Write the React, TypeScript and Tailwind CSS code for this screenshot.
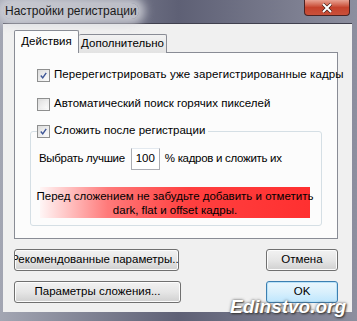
import React from "react";

function CheckBox({ checked }: { checked: boolean }) {
  return (
    <div className="shrink-0 w-[13px] h-[13px] border border-[#8e8f8f] bg-gradient-to-br from-[#dcdcdc] to-[#fbfbfb] p-[2px] flex items-center justify-center">
      <div className="w-full h-full bg-gradient-to-br from-[#e4e4e4] to-[#fafafa] flex items-center justify-center">
        {checked && (
          <svg width="9" height="9" viewBox="0 0 9 9">
            <path d="M1 4.5 L3.5 7.5 L8 1" fill="none" stroke="#3d5596" strokeWidth="1.8" />
          </svg>
        )}
      </div>
    </div>
  );
}

function Btn({ children, w, primary }: { children: React.ReactNode; w: string; primary?: boolean }) {
  return (
    <div
      className={`${w} h-[22px] rounded-[3px] border overflow-hidden flex items-center justify-center whitespace-nowrap ${
        primary
          ? "border-[#3c7fb1] bg-gradient-to-b from-[#eaf6fd] via-[#d9f0fc] to-[#bee6fd] shadow-[inset_0_0_0_1px_#b9e2f8]"
          : "border-[#707070] bg-gradient-to-b from-[#f2f2f2] via-[#e6e6e6] to-[#d0d0d0] shadow-[inset_0_0_0_1px_#fcfcfc]"
      }`}
    >
      {children}
    </div>
  );
}

export default function App() {
  return (
    <div
      className="relative w-[357px] h-[321px] overflow-hidden bg-gradient-to-r from-[#a3a6b3] via-[#5e6075] to-[#8d8f9f] text-[11.5px] text-black whitespace-nowrap"
      style={{ fontFamily: '"Liberation Sans", Arial, sans-serif' }}
    >
      {/* title bar */}
      <div className="h-[23px] flex items-start justify-between pl-[3px] pr-[7px]">
        <div className="mt-[3px] px-[2px] text-[12px] leading-[16px] text-[#1a1a1a] bg-[#d0d1d7]/80 rounded-[8px] shadow-[0_0_10px_6px_rgba(214,215,221,0.8)]">
          Настройки регистрации
        </div>
        <div className="ml-auto w-[46px] h-[16px] rounded-b-[4px] border border-t-0 border-[#4a2222] bg-gradient-to-b from-[#e8a293] via-[#c5422c] to-[#c9503a] flex items-center justify-center">
          <svg width="12" height="10" viewBox="0 0 12 10">
            <path d="M2 1 L10 9 M10 1 L2 9" stroke="#3a1a12" strokeWidth="3.2" />
            <path d="M2 1 L10 9 M10 1 L2 9" stroke="#ffffff" strokeWidth="2" />
          </svg>
        </div>
      </div>

      {/* client area */}
      <div className="ml-[3px] mr-[5px] h-[289px] bg-[#f0f0f0] border-t border-[#40404e] pl-[11px] pr-[14px] pt-[6px]">
        {/* tabs */}
        <div className="flex items-end h-[23px] relative z-10">
          <div className="h-[23px] w-[65px] bg-[#fcfcfc] border border-b-0 border-[#898c95] rounded-t-[2px] flex items-center justify-center pb-[1px]">
            Действия
          </div>
          <div className="h-[19px] w-[88px] bg-gradient-to-b from-[#f2f2f2] to-[#e3e3e3] border border-l-0 border-b-0 border-[#898c95] rounded-t-[2px] flex items-center justify-center">
            Дополнительно
          </div>
        </div>

        {/* panel */}
        <div className="-mt-[1px] h-[187px] bg-[#fcfcfc] border border-[#898c95] pt-[15px] pl-[22px] pr-[10px]">
          <div className="flex items-center gap-[4px] h-[14px]">
            <CheckBox checked />
            <span className="tracking-[0.1px]">Перерегистрировать уже зарегистрированные кадры</span>
          </div>
          <div className="flex items-center gap-[4px] h-[14px] mt-[15px]">
            <CheckBox checked={false} />
            <span>Автоматический поиск горячих пикселей</span>
          </div>

          {/* group */}
          <div className="relative -ml-[7px] mt-[20px] w-[292px] h-[95px] border border-[#d5dfe5] rounded-[3px] pt-[16px] pl-[8px]">
            <div className="absolute -top-[8px] left-[6px] flex items-center gap-[4px] h-[14px] bg-[#fcfcfc] pr-[3px]">
              <CheckBox checked />
              <span>Сложить после регистрации</span>
            </div>
            <div className="flex items-center h-[22px]">
              <span className="tracking-[-0.3px]">Выбрать лучшие</span>
              <div className="ml-[6px] w-[29px] h-[22px] border border-[#abadb3] border-t-[#e3e9ef] bg-white flex items-center justify-end pr-[4px]">
                100
              </div>
              <span className="ml-[5px] tracking-[-0.3px]">% кадров и сложить их</span>
            </div>
            <div className="mt-[17px] ml-[1px] w-[270px] h-[31px] bg-[linear-gradient(to_right,#fff6f6_0%,#ff7a7a_25%,#ff4040_55%,#ff3030_100%)] flex flex-col items-center justify-center leading-[14px]">
              <span>Перед сложением не забудьте добавить и отметить</span>
              <span>dark, flat и offset кадры.</span>
            </div>
          </div>
        </div>

        {/* buttons */}
        <div className="mt-[10px] flex justify-between">
          <Btn w="w-[165px]">Рекомендованные параметры...</Btn>
          <Btn w="w-[72px]">Отмена</Btn>
        </div>
        <div className="mt-[10px] flex justify-between">
          <Btn w="w-[167px]">Параметры сложения...</Btn>
          <Btn w="w-[72px]" primary>
            OK
          </Btn>
        </div>
      </div>

      {/* watermark */}
      <div className="absolute left-[230px] top-[296px] text-[19px] leading-[22px] font-bold italic text-white [text-shadow:1px_1px_2px_#333,0_0_3px_#555]">
        Edinstvo.org
      </div>
    </div>
  );
}
